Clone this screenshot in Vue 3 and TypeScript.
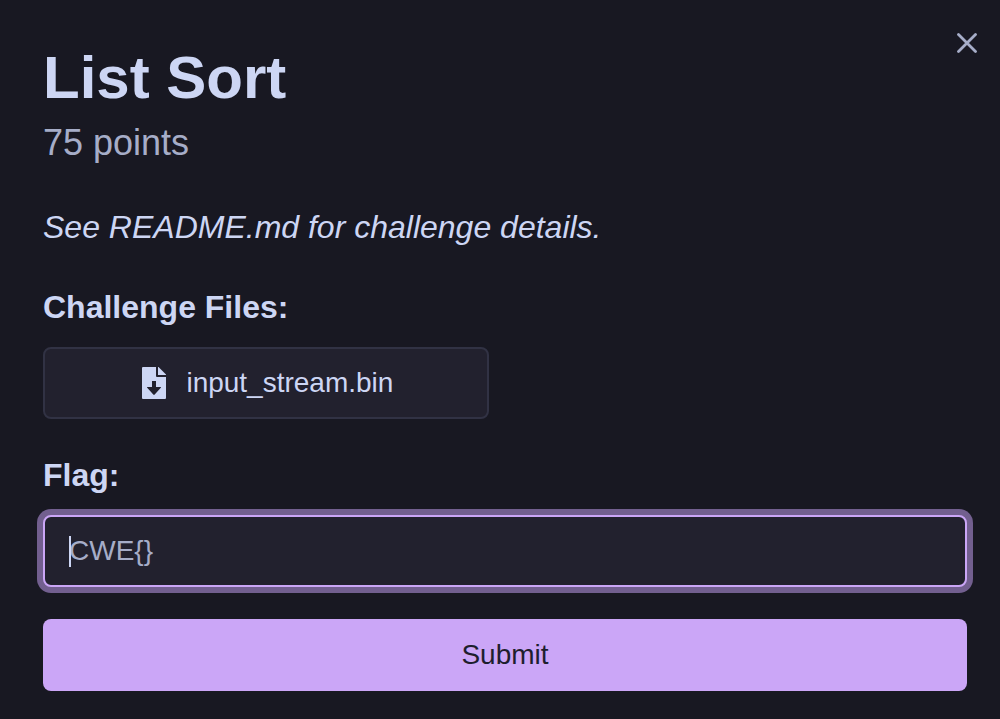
<script setup lang="ts">
import { onMounted, ref } from 'vue'

const flag = ref('')
const flagInput = ref<HTMLInputElement | null>(null)

onMounted(() => flagInput.value?.focus())
</script>

<template>
  <main class="dialog" role="dialog" aria-labelledby="title">
    <button class="close" type="button" aria-label="Close">
      <svg viewBox="0 0 20 20" width="20" height="20" aria-hidden="true">
        <path d="M1.5 1.5 18.5 18.5M18.5 1.5 1.5 18.5" fill="none" stroke="currentColor" stroke-width="2.8" stroke-linecap="round" />
      </svg>
    </button>
    <h1 id="title">List Sort</h1>
    <p class="points">75 points</p>
    <p class="details"><em>See README.md for challenge details.</em></p>
    <h2>Challenge Files:</h2>
    <a class="file" href="#input_stream.bin">
      <svg viewBox="0 0 24 32" width="24" height="32" aria-hidden="true">
        <path fill="currentColor" fill-rule="evenodd" d="M14 0H1Q0 0 0 1V31Q0 32 1 32H23Q24 32 24 31V10H15Q14 10 14 9ZM10 14h4v6h4.600q.8 0 .2.700L12.700 27.600q-.7.700-1.400 0L5.200 20.700q-.6-.7.200-.7H10Z" />
        <path fill="currentColor" d="M16 0v8h8v-.5L16.500 0Z" />
      </svg>
      <span>input_stream.bin</span>
    </a>
    <form @submit.prevent>
      <label for="flag">Flag:</label>
      <div class="field">
        <input id="flag" ref="flagInput" v-model="flag" type="text" placeholder="CWE{}" autocomplete="off" />
        <span v-if="!flag" class="caret" aria-hidden="true"></span>
      </div>
      <button class="submit" type="submit">Submit</button>
    </form>
  </main>
</template>

<style>
body {
  background: #181822;
}
</style>

<style scoped>
.dialog {
  position: relative;
  box-sizing: border-box;
  min-height: 100vh;
  padding: 42px 33px 28px 43px;
  color: #cdd6f4;
  background: #181822;
  font-family: "Liberation Sans", Arial, sans-serif;
}
.close {
  position: absolute;
  top: 27px;
  right: 17px;
  display: grid;
  place-items: center;
  width: 32px;
  height: 32px;
  padding: 0;
  border: 0;
  color: #a6adc8;
  background: none;
  cursor: pointer;
}
h1 {
  margin: 0;
  font-size: 60px;
  line-height: 72px;
}
.points {
  margin: 8px 0 0;
  color: #a6adc8;
  font-size: 36px;
  line-height: 42px;
}
.details {
  margin: 43px 0 0;
  font-size: 32px;
  line-height: 40px;
}
h2,
label {
  display: block;
  margin: 40px 0 0;
  font-size: 32px;
  font-weight: 700;
  line-height: 40px;
}
.file {
  display: flex;
  align-items: center;
  justify-content: center;
  gap: 20px;
  box-sizing: border-box;
  width: 48.25%;
  height: 72px;
  margin-top: 20px;
  padding-left: 4px;
  border: 2px solid #313244;
  border-radius: 8px;
  color: #cdd6f4;
  background: #22212e;
  font-size: 28px;
  text-decoration: none;
}
label {
  margin-top: 36px;
}
.field {
  position: relative;
  margin-top: 20px;
}
input {
  box-sizing: border-box;
  display: block;
  width: 100%;
  height: 72px;
  padding: 0 24px;
  border: 2px solid #cba6f7;
  border-radius: 8px;
  outline: 0;
  color: #cdd6f4;
  background: #22212e;
  box-shadow: 0 0 0 6px #725f8f;
  font: inherit;
  font-size: 28px;
}
input:placeholder-shown {
  caret-color: transparent;
}
input::placeholder {
  color: #a6adc8;
  opacity: 1;
}
.caret {
  position: absolute;
  top: 21px;
  left: 26px;
  width: 2px;
  height: 31px;
  background: #cdd6f4;
  pointer-events: none;
}
.submit {
  display: block;
  width: 100%;
  height: 72px;
  margin-top: 32px;
  border: 0;
  border-radius: 8px;
  color: #1e1e2e;
  background: #cba6f7;
  font: inherit;
  font-size: 28px;
  cursor: pointer;
}
</style>
